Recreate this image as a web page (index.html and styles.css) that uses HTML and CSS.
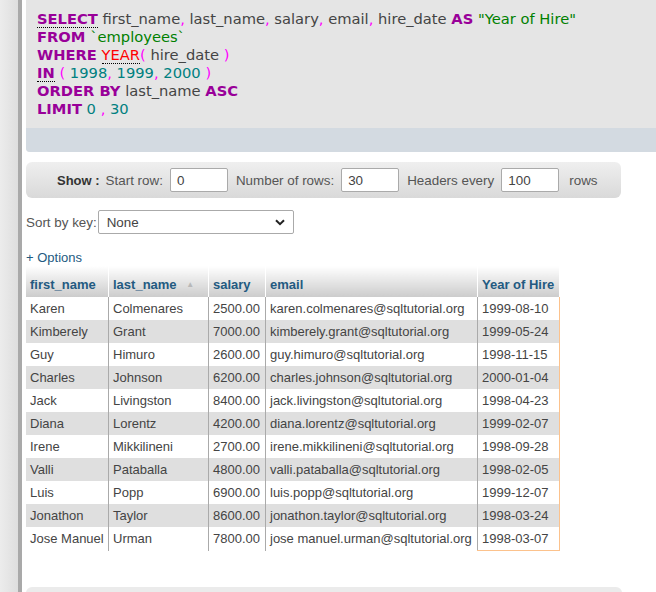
FILE: index.html
```html
<!DOCTYPE html>
<html>
<head>
<meta charset="utf-8">
<link rel="stylesheet" href="styles.css">
</head>
<body>
<div class="page">
  <div class="side"></div>
  <div class="divider"></div>
  <div class="main">
    <div class="sqlbox">
      <div class="sql">
        <div><span class="kw dot">SELECT</span> first_name<span class="p">,</span> last_name<span class="p">,</span> salary<span class="p">,</span> email<span class="p">,</span> hire_date <span class="kw">AS</span> <span class="str">"Year of Hire"</span></div>
        <div><span class="kw">FROM</span> <span class="str">`employees`</span></div>
        <div><span class="kw">WHERE</span> <span class="fn dot">YEAR</span><span class="p">(</span> hire_date <span class="p">)</span></div>
        <div><span class="kw dot">IN</span> <span class="p">(</span> <span class="num">1998</span><span class="p">,</span> <span class="num">1999</span><span class="p">,</span> <span class="num">2000</span> <span class="p">)</span></div>
        <div><span class="kw">ORDER BY</span> last_name <span class="kw">ASC</span></div>
        <div><span class="kw">LIMIT</span> <span class="num">0</span> <span class="p">,</span> <span class="num">30</span></div>
      </div>
      <div class="band"></div>
    </div>

    <div class="showbar">
      <span class="showlbl">Show :</span>
      <span class="lbl">Start row:</span>
      <span class="inp">0</span>
      <span class="lbl">Number of rows:</span>
      <span class="inp">30</span>
      <span class="lbl">Headers every</span>
      <span class="inp">100</span>
      <span class="lbl rows">rows</span>
    </div>

    <div class="sortrow">
      <span class="lbl">Sort by key:</span>
      <span class="select">None
        <svg class="chev" width="10" height="7" viewBox="0 0 10 7"><path d="M1 1.2 L5 5.2 L9 1.2" fill="none" stroke="#222" stroke-width="2"/></svg>
      </span>
    </div>

    <div class="options">+ Options</div>

    <table class="data">
      <thead>
        <tr>
          <th class="c1">first_name</th>
          <th class="c2">last_name <span class="arrow">▲</span></th>
          <th class="c3">salary</th>
          <th class="c4">email</th>
          <th class="c5">Year of Hire</th>
        </tr>
      </thead>
      <tbody>
        <tr><td>Karen</td><td>Colmenares</td><td>2500.00</td><td>karen.colmenares@sqltutorial.org</td><td class="m">1999-08-10</td></tr>
        <tr><td>Kimberely</td><td>Grant</td><td>7000.00</td><td>kimberely.grant@sqltutorial.org</td><td class="m">1999-05-24</td></tr>
        <tr><td>Guy</td><td>Himuro</td><td>2600.00</td><td>guy.himuro@sqltutorial.org</td><td class="m">1998-11-15</td></tr>
        <tr><td>Charles</td><td>Johnson</td><td>6200.00</td><td>charles.johnson@sqltutorial.org</td><td class="m">2000-01-04</td></tr>
        <tr><td>Jack</td><td>Livingston</td><td>8400.00</td><td>jack.livingston@sqltutorial.org</td><td class="m">1998-04-23</td></tr>
        <tr><td>Diana</td><td>Lorentz</td><td>4200.00</td><td>diana.lorentz@sqltutorial.org</td><td class="m">1999-02-07</td></tr>
        <tr><td>Irene</td><td>Mikkilineni</td><td>2700.00</td><td>irene.mikkilineni@sqltutorial.org</td><td class="m">1998-09-28</td></tr>
        <tr><td>Valli</td><td>Pataballa</td><td>4800.00</td><td>valli.pataballa@sqltutorial.org</td><td class="m">1998-02-05</td></tr>
        <tr><td>Luis</td><td>Popp</td><td>6900.00</td><td>luis.popp@sqltutorial.org</td><td class="m">1999-12-07</td></tr>
        <tr><td>Jonathon</td><td>Taylor</td><td>8600.00</td><td>jonathon.taylor@sqltutorial.org</td><td class="m">1998-03-24</td></tr>
        <tr class="last"><td>Jose Manuel</td><td>Urman</td><td>7800.00</td><td>jose manuel.urman@sqltutorial.org</td><td class="m">1998-03-07</td></tr>
      </tbody>
    </table>

    <div class="bottombar"></div>
  </div>
</div>
</body>
</html>
```

FILE: styles.css
```css
html, body {
  margin: 0;
  padding: 0;
  background: #fff;
  overflow: hidden;
}
.page {
  display: flex;
  height: 592px;
  overflow: hidden;
}
.side {
  width: 18px;
  flex: none;
  background: linear-gradient(to right, #ececec, #dedede);
}
.divider {
  width: 4px;
  flex: none;
  background: #a9a9a9;
}
.main {
  flex: 1;
  padding-left: 4px;
  min-width: 0;
  font-family: "Liberation Sans", Arial, sans-serif;
  font-size: 13px;
  color: #444;
}
.sqlbox {
  background: #e5e5e5;
  border-bottom-left-radius: 4px;
  overflow: hidden;
  margin-right: -10px;
}
.sql {
  font-family: "DejaVu Sans", Verdana, sans-serif;
  font-size: 14.7px;
  line-height: 18px;
  color: #444;
  padding: 10px 0 10px 11px;
  white-space: nowrap;
}
.kw { color: #990099; font-weight: bold; }
.dot { border-bottom: 1px dotted #000; }
.p { color: #ff00ff; }
.str { color: #008000; }
.num { color: #008080; }
.fn { color: #ff0000; }
.band {
  height: 24px;
  background: #d3dae1;
}
.showbar {
  margin-top: 10px;
  width: 595px;
  height: 36px;
  box-sizing: border-box;
  border-radius: 6px;
  background: linear-gradient(to bottom, #efefef, #d9d9d9);
  display: flex;
  align-items: center;
  padding-left: 31px;
  color: #555;
  font-size: 13.4px;
}
.showlbl {
  font-weight: bold;
  color: #333;
  margin-right: 6px;
  font-size: 13px;
}
.lbl { color: #555; }
.inp {
  display: inline-block;
  width: 58px;
  height: 24px;
  box-sizing: border-box;
  border: 1px solid #aaa;
  border-radius: 2px;
  background: #fff;
  padding: 4px 0 0 6px;
  margin: 0 8px 0 7px;
  color: #444;
}
.rows { margin-left: 2px; }
.sortrow {
  margin-top: 12px;
  display: flex;
  align-items: center;
  height: 24px;
  font-size: 13.4px;
}
.select {
  margin-left: 1px;
  width: 196px;
  height: 24px;
  box-sizing: border-box;
  border: 1px solid #aaa;
  border-radius: 2px;
  background: #fff;
  display: flex;
  align-items: center;
  padding-left: 8px;
  color: #444;
  position: relative;
}
.chev {
  position: absolute;
  right: 8px;
  top: 8px;
}
.options {
  margin-top: 16px;
  color: #235a81;
  line-height: 16px;
}
table.data {
  margin-top: 0;
  border-collapse: collapse;
  font-size: 13px;
  color: #444;
}
table.data th {
  text-align: left;
  font-weight: bold;
  color: #235a81;
  background: linear-gradient(to bottom, #fff, #ccc);
  padding: 11px 4px 5px 4px;
  line-height: 15px;
  border-left: 1px solid #fff;
  white-space: nowrap;
}
table.data th:first-child { border-left: none; }
.c1 { width: 74px; }
.c2 { width: 91px; }
.c3 { width: 48px; }
.c4 { width: 203px; }
.c5 { width: 73px; }
.arrow {
  font-size: 8px;
  color: #b8b8b8;
  margin-left: 6px;
  vertical-align: 2px;
}
table.data td {
  padding: 4px 4px;
  line-height: 15px;
  border-left: 1px solid #aaa;
  white-space: nowrap;
}
table.data td:first-child { border-left: none; }
table.data tbody tr:nth-child(even) td { background: #dfdfdf; }
table.data tbody tr:nth-child(odd) td { background: #fff; }
table.data td.m { border-right: 1px solid #fcc28c; }
table.data tr.last td.m { border-bottom: 1px solid #fcc28c; }
.bottombar {
  margin-top: 36px;
  width: 596px;
  height: 20px;
  border-radius: 6px 6px 0 0;
  background: #ebebeb;
}
```
